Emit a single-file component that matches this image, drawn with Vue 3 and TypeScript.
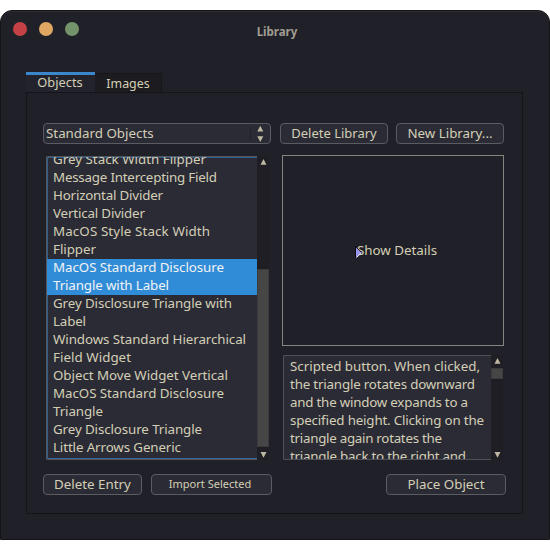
<script setup lang="ts">
interface Line {
  text: string
  width: number
  selected?: boolean
}

const objects: Line[] = [
  { text: 'Grey Stack Width Flipper', width: 153 },
  { text: 'Message Intercepting Field', width: 164 },
  { text: 'Horizontal Divider', width: 110 },
  { text: 'Vertical Divider', width: 92 },
  { text: 'MacOS Style Stack Width', width: 157 },
  { text: 'Flipper', width: 43 },
  { text: 'MacOS Standard Disclosure', width: 171, selected: true },
  { text: 'Triangle with Label', width: 116, selected: true },
  { text: 'Grey Disclosure Triangle with', width: 179 },
  { text: 'Label', width: 33 },
  { text: 'Windows Standard Hierarchical', width: 193 },
  { text: 'Field Widget', width: 78 },
  { text: 'Object Move Widget Vertical', width: 175 },
  { text: 'MacOS Standard Disclosure', width: 171 },
  { text: 'Triangle', width: 50 },
  { text: 'Grey Disclosure Triangle', width: 149 },
  { text: 'Little Arrows Generic', width: 128 },
]

const description: Line[] = [
  { text: 'Scripted button. When clicked,', width: 190 },
  { text: 'the triangle rotates downward', width: 185 },
  { text: 'and the window expands to a', width: 178 },
  { text: 'specified height. Clicking on the', width: 194 },
  { text: 'triangle again rotates the', width: 152 },
  { text: 'triangle back to the right and', width: 176 },
]
</script>

<template>
  <main class="window">
    <header class="titlebar">
      <div class="lights">
        <i class="light close"></i><i class="light minimise"></i><i class="light zoom"></i>
      </div>
      <h1>Library</h1>
    </header>

    <nav class="tabs">
      <div class="tab active">Objects</div>
      <div class="tab">Images</div>
    </nav>

    <section class="panel">
      <div class="row toolbar">
        <div class="control select">
          <span>Standard Objects</span>
          <svg class="arrows" width="20" height="19" viewBox="0 0 20 19">
            <path d="M.5 3v13" stroke="#22222a" />
            <path d="M7.3 7.5h6L10.3 1.8zM7.3 12.2h6l-3 5.7z" fill="#bdb9a0" />
          </svg>
        </div>
        <button class="control delete-library">Delete Library</button>
        <button class="control new-library">New Library...</button>
      </div>

      <div class="content">
        <div class="list-area">
          <div class="list">
            <div class="lines">
              <div v-for="(line, i) in objects" :key="i" class="line" :class="{ selected: line.selected }">
                <svg width="200" height="18"><text x="0" y="13" :textLength="line.width">{{ line.text }}</text></svg>
              </div>
            </div>
          </div>
          <div class="scrollbar">
            <svg width="12" height="12"><path d="M3.5 8.8h6L6.5 3z" fill="#bdb9a0" /></svg>
            <div class="thumb tall"></div>
            <svg width="12" height="12"><path d="M3.5 5h6l-3 5.7z" fill="#bdb9a0" /></svg>
          </div>
        </div>

        <div class="details">
          <div class="preview">
            <svg class="disclosure" width="8" height="13" viewBox="0 0 8 13">
              <path d="M1 1.5v10L6.5 6.5z" fill="#9a96ef" />
              <path d="M.5 0v11" stroke="#08080c" />
              <path d="M1 1l5.5 5.5" stroke="#17171e" fill="none" />
              <path d="M1.5 11.5L6.5 6.8" stroke="#eeeef8" fill="none" />
            </svg>
            <span>Show Details</span>
          </div>
          <div class="description-area">
            <div class="description">
              <div v-for="(line, i) in description" :key="i" class="line">
                <svg width="200" height="18"><text x="0" y="13" :textLength="line.width">{{ line.text }}</text></svg>
              </div>
            </div>
            <div class="scrollbar">
              <svg width="12" height="12"><path d="M3.5 8.8h6L6.5 3z" fill="#bdb9a0" /></svg>
              <div class="thumb short"></div>
              <svg class="down" width="12" height="12"><path d="M3.5 4h6l-3 5.7z" fill="#bdb9a0" /></svg>
            </div>
          </div>
        </div>
      </div>

      <div class="row actions">
        <button class="control delete-entry">Delete Entry</button>
        <button class="control import">Import Selected</button>
        <button class="control place">Place Object</button>
      </div>
    </section>
  </main>
</template>

<style>
body {
  background: #fff;
  overflow: hidden;
}
</style>

<style scoped>
* {
  box-sizing: border-box;
}
.window {
  width: 550px;
  height: 530px;
  margin-top: 10px;
  background: #202028;
  border: 1px solid #141418;
  border-radius: 12px 12px 0 0;
  box-shadow: inset 0 1px #2d2d33;
  color: #d3cfb5;
  font: 13.33px/18px "Noto Sans", sans-serif;
  white-space: nowrap;
}
.titlebar {
  height: 61px;
  display: grid;
  grid-template-columns: 100px 1fr 96px;
  padding: 11px 0 0 12px;
}
.lights {
  display: flex;
  gap: 12px;
}
.light {
  width: 14px;
  height: 14px;
  border-radius: 50%;
}
.close { background: #c44145; }
.minimise { background: #dfa763; }
.zoom { background: #75936a; }
h1 {
  margin: 1px 12px 0 0;
  text-align: center;
  font-size: 11.5px;
  line-height: 18px;
  font-weight: 700;
  color: #a09e91;
}
.tabs {
  display: flex;
  height: 20px;
  margin-left: 25px;
}
.tab {
  width: 67px;
  height: 19px;
  margin-top: 1px;
  background: #1c1c20;
  border: 1px solid #17171a;
  border-left: 0;
  border-bottom: 0;
  font-size: 12.4px;
  line-height: 19px;
  text-align: center;
}
.tab.active {
  width: 69px;
  height: 20px;
  margin-top: 0;
  background: #23232d;
  border: 0;
  border-top: 3px solid #3a87cb;
  font-size: 12.8px;
  line-height: 14px;
  padding-right: 1px;
}
.panel {
  width: 497px;
  height: 422px;
  margin-left: 25px;
  border: 1px solid #141418;
  padding: 30px 16px 0;
}
.row {
  display: flex;
  height: 21px;
}
.control {
  height: 21px;
  margin: 0;
  padding: 0 0 1px;
  border: 1px solid #5b5b63;
  border-radius: 4px;
  background: #2b2b36;
  color: inherit;
  font: 13.33px/18px "Noto Sans", sans-serif;
  text-align: center;
}
.select {
  width: 228px;
  display: flex;
  justify-content: space-between;
  padding: 0 0 0 2px;
}
.select .arrows {
  flex: none;
}
.delete-library { width: 108px; margin-left: 9px; font-size: 13px; }
.new-library { width: 108px; margin-left: 8px; }
.content {
  display: flex;
  align-items: flex-start;
  margin: 11px 0 0 3px;
  height: 319px;
}
.list-area {
  display: flex;
  margin-top: 1px;
  height: 304px;
}
.list {
  width: 211px;
  overflow: hidden;
  background: #2b2b36;
  border: 1px solid #55555d;
  border-right: 0;
  border-radius: 2px 0 0 2px;
  box-shadow: inset 1px 1px #315f8b, inset 0 -1px #346594;
}
.lines {
  margin-top: -6px;
}
.line {
  height: 18px;
  padding-left: 6px;
}
.line svg {
  display: block;
  overflow: visible;
}
.line text {
  fill: currentColor;
}
.line.selected {
  background: #318cd7;
  color: #f2f3f4;
}
.scrollbar {
  width: 12px;
  display: flex;
  flex-direction: column;
  background: #1e1e24;
}
.scrollbar svg {
  display: block;
  flex: none;
}
.thumb {
  background: #464646;
  border: 1px solid #3b3b3b;
}
.tall {
  height: 178px;
  margin-top: 101px;
}
.short {
  height: 11px;
  margin-top: 1px;
}
.down {
  margin-top: auto;
}
.details {
  margin-left: 13px;
}
.preview {
  position: relative;
  width: 222px;
  height: 191px;
  border: 1px solid #85857f;
  padding: 85px 0 0 74px;
}
.disclosure {
  position: absolute;
  left: 72px;
  top: 90px;
}
.description-area {
  display: flex;
  height: 105px;
  margin: 9px 0 0 1px;
}
.description {
  width: 208px;
  overflow: hidden;
  padding: 2px 0 0;
  background: #2b2b36;
  border: 1px solid #505059;
  border-right: 0;
  border-radius: 2px 0 0 2px;
}
.delete-entry { width: 99px; }
.import {
  width: 121px;
  margin-left: 9px;
  padding: 0 3px 2px 0;
  font-size: 11px;
}
.place {
  width: 120px;
  flex: none;
  margin-left: 114px;
}
</style>
